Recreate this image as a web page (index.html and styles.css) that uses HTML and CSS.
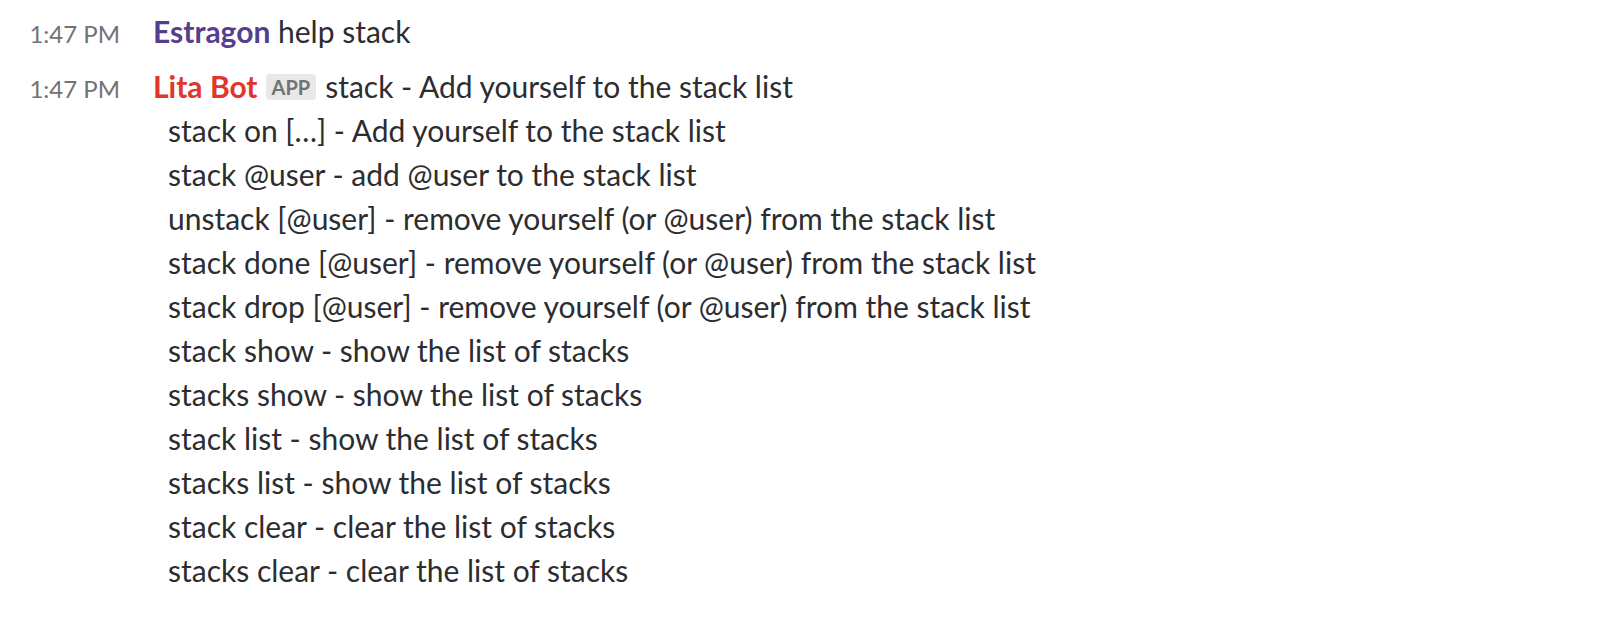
FILE: index.html
```html
<!DOCTYPE html>
<html>
<head>
<meta charset="utf-8">
<link rel="stylesheet" href="styles.css">
</head>
<body>
<div class="feed">
  <div class="msg">
    <div class="ts">1:47 PM</div>
    <div class="content">
      <div class="line"><span class="name estragon">Estragon</span> help stack</div>
    </div>
  </div>
  <div class="msg second">
    <div class="ts">1:47 PM</div>
    <div class="content">
      <div class="line"><span class="name lita">Lita Bot</span><span class="badge">APP</span>stack - Add yourself to the stack list</div>
      <div class="line cont">stack on […] - Add yourself to the stack list</div>
      <div class="line cont">stack @user - add @user to the stack list</div>
      <div class="line cont">unstack [@user] - remove yourself (or @user) from the stack list</div>
      <div class="line cont">stack done [@user] - remove yourself (or @user) from the stack list</div>
      <div class="line cont">stack drop [@user] - remove yourself (or @user) from the stack list</div>
      <div class="line cont">stack show - show the list of stacks</div>
      <div class="line cont">stacks show - show the list of stacks</div>
      <div class="line cont">stack list - show the list of stacks</div>
      <div class="line cont">stacks list - show the list of stacks</div>
      <div class="line cont">stack clear - clear the list of stacks</div>
      <div class="line cont">stacks clear - clear the list of stacks</div>
    </div>
  </div>
</div>
</body>
</html>
```
FILE: styles.css
```css
html, body {
  margin: 0;
  padding: 0;
  background: #ffffff;
}
body {
  font-family: Lato, "Noto Sans", sans-serif;
  color: #2c2d30;
}
.feed {
  padding-top: 9px;
}
.msg {
  display: flex;
  align-items: baseline;
}
.msg.second {
  margin-top: 8px;
}
.ts {
  width: 120px;
  text-align: right;
  font-size: 24px;
  color: #717274;
  flex: none;
  line-height: 44px;
}
.content {
  margin-left: 33px;
  font-size: 30px;
  line-height: 44px;
}
.name {
  font-weight: 700;
}
.estragon {
  color: #553d8f;
}
.lita {
  color: #e2352c;
}
.badge {
  display: inline-block;
  background: #e8e8e8;
  color: #717274;
  font-size: 20px;
  font-weight: 700;
  line-height: 26px;
  padding: 0 6px;
  border-radius: 4px;
  margin: 0 9px 0 8px;
  vertical-align: 3px;
}
.cont {
  padding-left: 15px;
}
```
